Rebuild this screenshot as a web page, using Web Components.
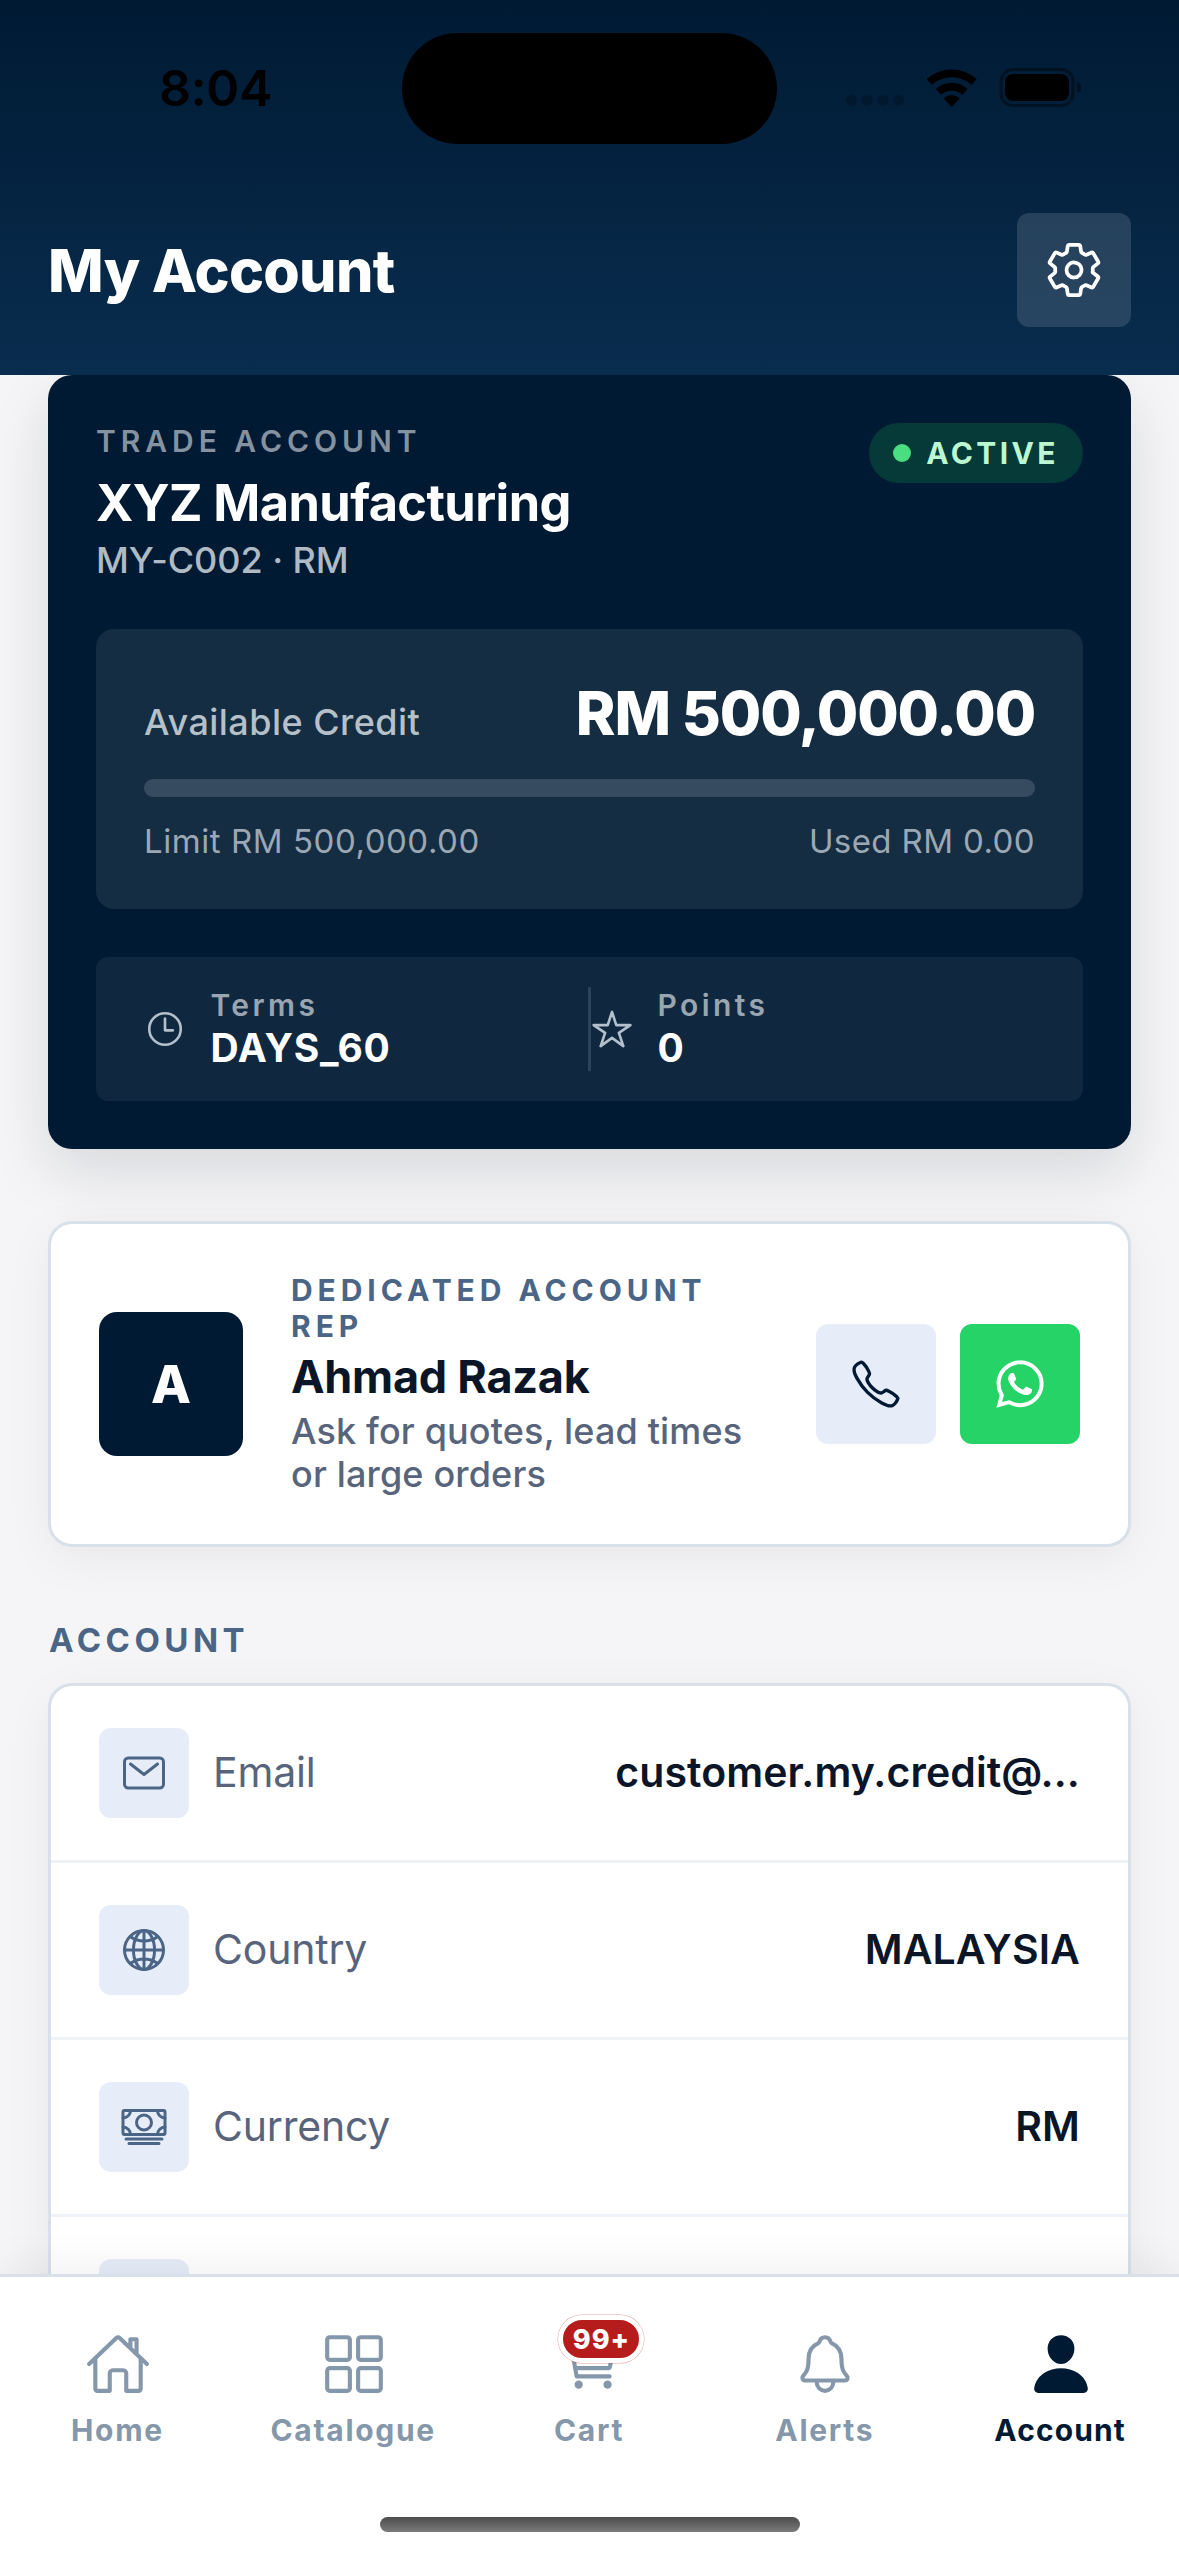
<!DOCTYPE html>
<html lang="en">
<head>
<meta charset="utf-8">
<title>My Account</title>
<style>
  html, body { margin: 0; padding: 0; }
  body { width: 1179px; height: 2556px; overflow: hidden; background: #f5f5f7; font-family: Inter, "Liberation Sans", sans-serif; }
</style>
</head>
<body>
<account-screen></account-screen>
<script>
const ICONS = {
  settings: '<path d="M262.29 192.31a64 64 0 1057.4 57.4 64.13 64.13 0 00-57.4-57.4zM416.39 256a154.34 154.34 0 01-1.53 20.79l45.21 35.46a10.81 10.81 0 012.45 13.75l-42.77 74a10.81 10.81 0 01-13.14 4.59l-44.9-18.08a16.11 16.11 0 00-15.17 1.75A164.48 164.48 0 01325 400.8a15.94 15.94 0 00-8.82 12.14l-6.73 47.89a11.08 11.08 0 01-10.68 9.17h-85.54a11.11 11.11 0 01-10.69-8.87l-6.72-47.82a16.07 16.07 0 00-9-12.22 155.3 155.3 0 01-21.46-12.57 16 16 0 00-15.11-1.71l-44.89 18.07a10.81 10.81 0 01-13.14-4.58l-42.77-74a10.8 10.8 0 012.45-13.75l38.21-30a16.05 16.05 0 006-14.08c-.36-4.17-.58-8.33-.58-12.5s.21-8.27.58-12.35a16 16 0 00-6.07-13.94l-38.19-30A10.81 10.81 0 0149.48 186l42.77-74a10.81 10.81 0 0113.14-4.59l44.9 18.08a16.11 16.11 0 0015.17-1.75A164.48 164.48 0 01187 111.2a15.94 15.94 0 008.82-12.14l6.73-47.89A11.08 11.08 0 01213.23 42h85.54a11.11 11.11 0 0110.69 8.87l6.72 47.82a16.07 16.07 0 009 12.22 155.3 155.3 0 0121.46 12.57 16 16 0 0015.11 1.71l44.89-18.07a10.81 10.81 0 0113.14 4.58l42.77 74a10.8 10.8 0 01-2.45 13.75l-38.21 30a16.05 16.05 0 00-6.05 14.08c.33 4.14.55 8.3.55 12.47z"/>',
  time: '<path d="M256 64C150 64 64 150 64 256s86 192 192 192 192-86 192-192S362 64 256 64z"/><path d="M256 128v144h96"/>',
  star: '<path d="M480 208H308L256 48l-52 160H32l140 96-54 160 138-100 138 100-54-160z"/>',
  call: '<path d="M451 374c-15.88-16-54.34-39.35-73-48.76-24.3-12.24-26.3-13.24-45.4.95-12.74 9.47-21.21 17.93-36.12 14.75s-47.31-21.11-75.68-49.39-47.34-61.62-50.53-76.48 5.41-23.23 14.79-36c13.22-18 12.22-21 .92-45.3-8.81-18.9-32.84-57-48.9-72.8C119.9 44 119.9 47 108.83 51.6A160.15 160.15 0 0083 65.37C67 76 58.12 84.83 51.91 98.1s-9 44.38 23.07 102.64 54.57 88.05 101.14 134.49S258.5 406.64 310.85 436c64.76 36.27 89.6 29.2 102.91 23s22.18-15 32.83-31a159.09 159.09 0 0013.8-25.8C465 391.17 468 391.17 451 374z"/>',
  whatsapp: '<path fill="currentColor" stroke="none" fill-rule="evenodd" d="M414.73 97.1A222.14 222.14 0 00256.94 32C134 32 33.92 131.58 33.87 254a220.61 220.61 0 0029.78 111L32 480l118.25-30.87a223.63 223.63 0 00106.6 27h.09c122.93 0 223-99.59 223.06-222A220.18 220.18 0 00414.73 97.1zM256.94 438.66h-.08a185.75 185.75 0 01-94.36-25.72l-6.77-4-70.17 18.32 18.73-68.09-4.41-7A183.46 183.46 0 0171.53 254c0-101.73 83.21-184.5 185.48-184.5a185 185 0 01185.33 184.64c-.04 101.74-83.21 184.52-185.4 184.52zm101.69-138.19c-5.57-2.78-33-16.2-38.08-18.05s-8.83-2.78-12.54 2.78-14.4 18-17.65 21.75-6.5 4.16-12.07 1.38-23.54-8.63-44.83-27.53c-16.57-14.71-27.75-32.87-31-38.42s-.35-8.56 2.44-11.32c2.51-2.49 5.57-6.48 8.36-9.72s3.72-5.56 5.57-9.26.93-6.94-.46-9.71-12.54-30.08-17.18-41.19c-4.53-10.82-9.12-9.35-12.54-9.52-3.25-.16-7-.2-10.69-.2a20.53 20.53 0 00-14.86 6.94c-5.11 5.56-19.51 19-19.51 46.28s20 53.68 22.76 57.38 39.3 59.73 95.21 83.76a323.11 323.11 0 0031.78 11.68c13.35 4.22 25.5 3.63 35.1 2.2 10.71-1.59 33-13.42 37.63-26.38s4.64-24.06 3.25-26.37-5.11-3.71-10.69-6.48z"/>',
  mail: '<rect x="48" y="96" width="416" height="320" rx="40" ry="40"/><path d="M112 160l144 112 144-112"/>',
  globe: '<path d="M256 48C141.13 48 48 141.13 48 256s93.13 208 208 208 208-93.13 208-208S370.87 48 256 48z"/><path d="M256 48c-58.07 0-112.67 93.13-112.67 208S197.93 464 256 464s112.67-93.13 112.67-208S314.07 48 256 48z"/><path d="M117.33 117.33c38.24 27.15 86.38 43.34 138.67 43.34s100.43-16.19 138.67-43.34M394.67 394.67c-38.24-27.15-86.38-43.34-138.67-43.34s-100.43 16.19-138.67 43.34M256 48v416M464 256H48"/>',
  cash: '<rect x="32" y="80" width="448" height="256" rx="16" ry="16"/><path d="M64 384h384M96 432h320"/><circle cx="256" cy="208" r="80"/><path d="M480 160a80 80 0 01-80-80M32 160a80 80 0 0080-80M480 256a80 80 0 00-80 80M32 256a80 80 0 0180 80"/>',
  home: '<path d="M80 212v236a16 16 0 0016 16h96V328a24 24 0 0124-24h80a24 24 0 0124 24v136h96a16 16 0 0016-16V212"/><path d="M480 256L266.89 52c-5-5.28-16.69-5.34-21.78 0L32 256M400 179V64h-48v69"/>',
  grid: '<rect x="48" y="48" width="176" height="176" rx="20"/><rect x="288" y="48" width="176" height="176" rx="20"/><rect x="48" y="288" width="176" height="176" rx="20"/><rect x="288" y="288" width="176" height="176" rx="20"/>',
  cart: '<circle cx="176" cy="416" r="16" fill="currentColor"/><circle cx="400" cy="416" r="16" fill="currentColor"/><path d="M48 80h64l48 272h256"/><path d="M160 288h249.44a8 8 0 007.85-6.43l28.8-144a8 8 0 00-7.85-9.57H128"/>',
  bell: '<path d="M427.68 351.43C402 320 383.87 304 383.87 217.35 383.87 138 343.35 109.73 310 96c-4.43-1.82-8.6-6-9.95-10.55C294.2 65.54 277.8 48 256 48s-38.21 17.55-44 37.47c-1.35 4.6-5.52 8.71-9.95 10.53-33.39 13.75-73.87 41.92-73.87 121.35C128.13 304 110 320 84.32 351.43 73.68 364.45 83 384 101.61 384h308.88c18.51 0 27.77-19.61 17.19-32.57zM320 384v16a64 64 0 01-128 0v-16"/>',
  person: '<path fill="currentColor" stroke="none" d="M332.64 64.58C313.18 43.57 286 32 256 32c-30.16 0-57.43 11.5-76.8 32.38-19.58 21.11-29.12 49.8-26.88 80.78C156.76 206.28 203.27 256 256 256s99.16-49.71 103.67-110.82c2.27-30.7-7.33-59.33-27.03-80.6zM432 480H80a31 31 0 01-24.2-11.13c-6.5-7.77-9.12-18.38-7.18-29.11C57.06 392.94 83.4 353.61 124.8 326c36.78-24.51 83.37-38 131.2-38s94.42 13.5 131.2 38c41.4 27.6 67.74 66.93 76.18 113.75 1.94 10.73-.68 21.34-7.18 29.11A31 31 0 01432 480z"/>'
};

class Base extends HTMLElement {
  constructor() { super(); this.attachShadow({ mode: 'open' }); }
  connectedCallback() { this.shadowRoot.innerHTML = `<style>*{box-sizing:border-box}${this.styles()}</style>${this.markup()}`; }
  a(n) { return this.getAttribute(n) || ''; }
}
const define = (name, styles, markup) => customElements.define(name, class extends Base {
  styles() { return styles; }
  markup() { return markup(this); }
});

define('ui-icon', `:host{display:block;flex:none}svg{display:block;overflow:visible}`,
  e => `<svg width="${e.a('size')}" height="${e.a('size')}" viewBox="0 0 512 512" fill="none" stroke="currentColor" stroke-width="32" stroke-linecap="round" stroke-linejoin="round">${ICONS[e.a('name')] || ''}</svg>`);

define('status-bar', `
  :host{display:flex;align-items:flex-start;justify-content:space-between;height:165px;color:#000}
  .side{width:402px;display:flex;padding-top:58px}
  .time{padding-left:159px;font-size:50px;line-height:61px;font-weight:590;letter-spacing:-.3px}
  .island{width:375px;height:111px;margin-top:33px;border-radius:56px;background:#000}
  .right{padding-left:69px;padding-top:68px}
  svg{display:block}`,
  () => `<div class="side"><span class="time">8:04</span></div><div class="island"></div>
  <div class="side right"><svg width="236" height="40" viewBox="0 0 236 40">
    <g fill="#000" fill-opacity=".2"><circle cx="5.5" cy="32.3" r="5.5"/><circle cx="21" cy="32.3" r="5.5"/><circle cx="37" cy="32.3" r="5.5"/><circle cx="52.5" cy="32.3" r="5.5"/></g>
    <g transform="translate(80.7 .8)" fill="none" stroke="#000"><path d="M2.6 13.1A33.5 33.5 0 0 1 47.4 13.1" stroke-width="7.8"/><path d="M11.6 23.1A20 20 0 0 1 38.4 23.1" stroke-width="7.8"/><path d="M25 38L17 29.6A11.5 11.5 0 0 1 33 29.6Z" fill="#000" stroke="none"/></g>
    <rect x="155" y="1.5" width="72" height="36" rx="12" fill="none" stroke="#000" stroke-opacity=".4" stroke-width="3"/>
    <rect x="159" y="6" width="64" height="27" rx="8" fill="#000"/>
    <path d="M231 13.5c3 1.4 4 3.4 4 6s-1 4.6-4 6z" fill="#000" fill-opacity=".45"/>
  </svg></div>`);

define('page-header', `
  :host{display:block;height:375px;flex:none;background:linear-gradient(180deg,#001a33 0%,#092d4f 100%)}
  .row{display:flex;align-items:center;justify-content:space-between;padding:48px 48px 0}
  h1{margin:1px 0 0;font-size:59px;line-height:72px;font-weight:780;letter-spacing:-.7px;color:#fff}
  .btn{width:114px;height:114px;border-radius:12px;background:rgba(255,255,255,.13);display:flex;align-items:center;justify-content:center;color:#fff}`,
  e => `<status-bar></status-bar><div class="row"><h1>${e.a('heading')}</h1><div class="btn"><ui-icon name="settings" size="60"></ui-icon></div></div>`);

define('status-pill', `
  :host{display:flex;align-items:center;gap:15px;height:60px;padding:0 24px;border-radius:30px;background:#063a38;color:#bbf7d0;font-size:30px;line-height:36px;font-weight:720;letter-spacing:3.4px}
  i{width:18px;height:18px;border-radius:50%;background:#4ade80}`,
  () => `<i></i><slot></slot>`);

define('metric-item', `
  :host{display:flex;flex:1;align-items:center;gap:24.5px}
  ui-icon{color:#b3bfca}
  .l{font-size:30px;line-height:37px;font-weight:600;letter-spacing:3.4px;color:#99a5b0}
  .v{font-size:39px;line-height:47px;font-weight:700;letter-spacing:.71px;color:#fff}`,
  e => `<ui-icon name="${e.a('icon')}" size="42"></ui-icon><div><div class="l">${e.a('label')}</div><div class="v"><slot></slot></div></div>`);

define('trade-card', `
  :host{display:block;padding:48px;border-radius:24px;background:#001a33;box-shadow:0 24px 60px rgba(0,26,36,.12)}
  .top{display:flex;justify-content:space-between;align-items:flex-start;height:158px}
  .eyebrow{font-size:30px;line-height:37px;font-weight:620;letter-spacing:4.95px;color:#8592a0}
  .name{margin-top:12px;font-size:50.5px;line-height:61px;font-weight:680;letter-spacing:-.6px;color:#fff}
  .code{margin-top:6px;font-size:36px;line-height:43px;font-weight:450;letter-spacing:-.05px;color:#b0bac5}
  .credit{margin-top:48px;height:280px;padding:48px;border-radius:18px;background:#142d42}
  .line{display:flex;justify-content:space-between;align-items:baseline}
  .av{font-size:36px;font-weight:500;letter-spacing:.45px;color:#b6c0c9}
  .amt{font-size:60px;line-height:73px;font-weight:790;letter-spacing:-1.15px;color:#fff}
  .bar{height:18px;margin:29px 0 24px;border-radius:9px;background:#364b60}
  .sub{font-size:33px;line-height:41px;font-weight:440;letter-spacing:.55px;color:#9ba8b4}
  .sub span:last-child{letter-spacing:.4px}
  .metrics{display:flex;margin-top:48px;height:144px;padding:30px 48px;border-radius:12px;background:#0f2840}
  .metrics b{width:3px;background:#2d4359}`,
  () => `<div class="top"><div><div class="eyebrow">TRADE ACCOUNT</div><div class="name">XYZ Manufacturing</div><div class="code">MY-C002 · RM</div></div><status-pill>ACTIVE</status-pill></div>
  <div class="credit"><div class="line"><span class="av">Available Credit</span><span class="amt">RM 500,000.00</span></div><div class="bar"></div>
  <div class="line sub"><span>Limit RM 500,000.00</span><span>Used RM 0.00</span></div></div>
  <div class="metrics"><metric-item icon="time" label="Terms">DAYS_60</metric-item><b></b><metric-item icon="star" label="Points">0</metric-item></div>`);

define('rep-card', `
  :host{display:flex;align-items:center;margin-top:72px;height:326px;box-sizing:border-box;padding:0 48px;border:3px solid #d8e0ea;border-radius:24px;background:#fff;box-shadow:0 12px 48px rgba(0,26,36,.055)}
  .avatar{flex:none;width:144px;height:144px;border-radius:18px;background:#001a33;color:#fff;display:flex;align-items:center;justify-content:center;font-size:52px;font-weight:800}
  .text{flex:1;margin:0 48px;min-width:0}
  .eyebrow{font-size:30px;line-height:36px;font-weight:670;letter-spacing:4.93px;color:#4a6585}
  .name{margin-top:6px;font-size:45px;line-height:54px;font-weight:680;letter-spacing:-.25px;color:#0a1628}
  .note{margin-top:6px;font-size:36px;line-height:43px;font-weight:450;letter-spacing:.15px;color:#58647c}
  .actions{display:flex;gap:24px}
  .btn{width:120px;height:120px;border-radius:12px;display:flex;align-items:center;justify-content:center;background:#e6edf8;color:#001a33}
  .wa{background:#25d366;color:#fff}`,
  e => `<div class="avatar">A</div><div class="text"><div class="eyebrow">DEDICATED ACCOUNT REP</div><div class="name">${e.a('name')}</div><div class="note"><slot></slot></div></div>
  <div class="actions"><div class="btn"><ui-icon name="call" size="54"></ui-icon></div><div class="btn wa"><ui-icon name="whatsapp" size="54"></ui-icon></div></div>`);

define('info-row', `
  :host{display:flex;align-items:center;height:177px;box-sizing:border-box;padding:0 48px;border-bottom:3px solid #eef2f7}
  .tile{flex:none;width:90px;height:90px;border-radius:12px;background:#e6edf8;color:#4a6585;display:flex;align-items:center;justify-content:center}
  .l,.v{margin-bottom:3px}
  .l{margin-left:24px;flex:1;font-size:41px;font-weight:430;letter-spacing:-.2px;color:#58647c}
  .v{font-size:41px;font-weight:580;letter-spacing:.08px;color:#0a1628}`,
  e => `<div class="tile"><ui-icon name="${e.a('icon')}" size="48"></ui-icon></div><span class="l">${e.a('label')}</span><span class="v"><slot></slot></span>`);

define('info-list', `
  :host{display:block}
  .h{margin-top:73px;padding-left:1px;font-size:33px;line-height:40px;font-weight:680;letter-spacing:4.45px;color:#4a6585}
  .card{margin-top:23px;border:3px solid #d8e0ea;border-radius:24px;background:#fff;overflow:hidden;box-shadow:0 12px 48px rgba(0,26,36,.055)}`,
  e => `<div class="h">${e.a('heading')}</div><div class="card"><slot></slot></div>`);

define('tab-item', `
  :host{flex:1;display:flex;flex-direction:column;align-items:center;gap:15px;color:#8497ab}
  :host([active]){color:#001a33}
  .ic{position:relative}
  .l{margin-right:1px;font-size:30px;line-height:37px;font-weight:660;letter-spacing:1.7px}
  :host([active]) .l{margin-right:2px;font-weight:700;letter-spacing:1.1px}
  .badge{position:absolute;left:2px;top:-16px;width:86px;height:48px;border-radius:24px;border:5px solid #fff;background:#b71c1c;box-shadow:0 0 0 .5px rgba(183,28,28,.4);color:#fff;display:flex;align-items:center;justify-content:center;font-size:27px;font-weight:780;letter-spacing:1px}`,
  e => `<div class="ic"><ui-icon name="${e.a('icon')}" size="66"></ui-icon>${e.a('badge') ? `<span class="badge">${e.a('badge')}</span>` : ''}</div><span class="l"><slot></slot></span>`);

define('tab-bar', `
  :host{display:flex;flex-direction:column;justify-content:space-between;height:282px;box-sizing:border-box;flex:none;border-top:3px solid #d8e0ea;background:#fff;box-shadow:0 -12px 36px rgba(0,20,35,.05);position:relative}
  .tabs{display:flex;padding-top:54px}
  .home{align-self:center;width:420px;height:15px;margin-bottom:24px;border-radius:8px;background:linear-gradient(#4c4c4c,#7a7a7a)}`,
  () => `<div class="tabs"><slot></slot></div><div class="home"></div>`);

define('account-screen', `
  :host{display:flex;flex-direction:column;width:1179px;height:2556px;background:#f5f5f7}
  main{flex:1;min-height:0;overflow:hidden;padding:0 48px}`,
  () => `<page-header heading="My Account"></page-header>
  <main>
    <trade-card></trade-card>
    <rep-card name="Ahmad Razak">Ask for quotes, lead times or large orders</rep-card>
    <info-list heading="ACCOUNT">
      <info-row icon="mail" label="Email">customer.my.credit@...</info-row>
      <info-row icon="globe" label="Country">MALAYSIA</info-row>
      <info-row icon="cash" label="Currency">RM</info-row>
      <info-row></info-row>
    </info-list>
  </main>
  <tab-bar>
    <tab-item icon="home">Home</tab-item>
    <tab-item icon="grid">Catalogue</tab-item>
    <tab-item icon="cart" badge="99+">Cart</tab-item>
    <tab-item icon="bell">Alerts</tab-item>
    <tab-item icon="person" active>Account</tab-item>
  </tab-bar>`);
</script>
</body>
</html>
